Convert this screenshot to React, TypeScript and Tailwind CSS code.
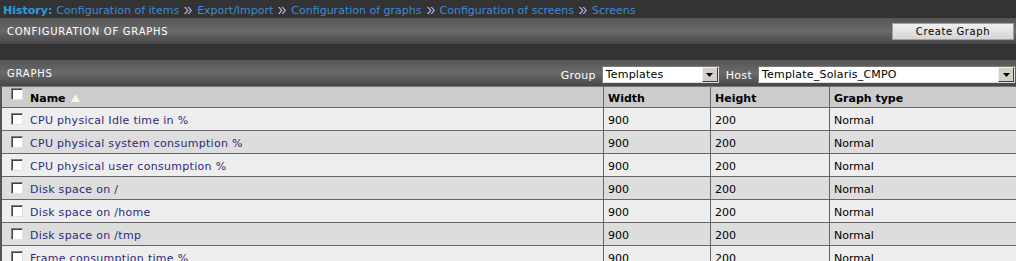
import React from "react";

const font = { fontFamily: '"DejaVu Sans", Verdana, sans-serif' };

const rows = [
  "CPU physical Idle time in %",
  "CPU physical system consumption %",
  "CPU physical user consumption %",
  "Disk space on /",
  "Disk space on /home",
  "Disk space on /tmp",
  "Frame consumption time %",
];

function Check() {
  return (
    <span className="inline-block w-[12px] h-[12px] bg-white border border-t-[#808080] border-l-[#808080] border-b-[#e0e0e0] border-r-[#e0e0e0] shadow-[inset_1px_1px_0_#404040]" />
  );
}

function Sep() {
  return (
    <svg width="8" height="7" viewBox="0 0 8 7" className="mx-[5px]">
      <path d="M0 0l3 3.5L0 7h1.5l3-3.5-3-3.5zM3.5 0l3 3.5-3 3.5H5l3-3.5L5 0z" fill="#b4b4ec" />
    </svg>
  );
}

function Select({ value, w }: { value: string; w: string }) {
  return (
    <div className={`${w} h-[17px] bg-white border border-t-[#7a7a7a] border-l-[#7a7a7a] border-b-[#dcdcdc] border-r-[#dcdcdc] flex items-center`}>
      <span className="flex-1 pl-[3px] text-[11px] text-black leading-none tracking-[0.2px]">{value}</span>
      <span className="w-[16px] h-[15px] bg-[#d4d0c8] border border-t-[#f4f4f4] border-l-[#f4f4f4] border-b-[#404040] border-r-[#404040] flex items-center justify-center">
        <svg width="7" height="4" viewBox="0 0 7 4"><path d="M0 0h7L3.5 4z" fill="#000" /></svg>
      </span>
    </div>
  );
}

export default function App() {
  return (
    <div style={font} className="w-[1016px] h-[261px] overflow-hidden bg-[#eeeeee]">
      {/* History */}
      <div className="h-[18px] bg-[#333333] flex items-center pl-[3px] pt-[2px] text-[11px] leading-none whitespace-nowrap">
        <span className="text-[#2b9be0] font-bold mr-[4px]">History:</span>
        <span className="text-[#3d8ad8]">Configuration of items</span>
        <Sep />
        <span className="text-[#3d8ad8]">Export/Import</span>
        <Sep />
        <span className="text-[#3d8ad8]">Configuration of graphs</span>
        <Sep />
        <span className="text-[#3d8ad8]">Configuration of screens</span>
        <Sep />
        <span className="text-[#3d8ad8]">Screens</span>
      </div>
      {/* Header 1 */}
      <div className="h-[26px] bg-gradient-to-b from-[#555555] via-[#6a6a6a] to-[#474747] flex items-center justify-between pl-[7px]">
        <span className="text-white text-[10px] tracking-[0.75px]">CONFIGURATION OF GRAPHS</span>
        <div className="w-[122px] h-[17px] mt-[1px] mr-[2px] bg-gradient-to-b from-[#f0f0f0] to-[#d4d4d4] border border-[#a0a0a0] flex items-center justify-center text-[10px] text-black tracking-[0.6px]">
          Create Graph
        </div>
      </div>
      <div className="h-[16px] bg-[#333333]" />
      {/* Header 2 */}
      <div className="h-[26px] bg-gradient-to-b from-[#555555] via-[#6a6a6a] to-[#474747] flex items-center pl-[7px]">
        <span className="text-white text-[10px] tracking-[0.75px] mt-[1px]">GRAPHS</span>
        <div className="ml-auto flex items-center mt-[3px]">
          <span className="text-white text-[11px] mr-[6px] mt-[3px] tracking-[0.3px]">Group</span>
          <Select value="Templates" w="w-[117px]" />
          <span className="text-white text-[11px] ml-[7px] mr-[6px] mt-[3px] tracking-[0.3px]">Host</span>
          <Select value="Template_Solaris_CMPO" w="w-[257px]" />
          <span className="w-[1px]" />
        </div>
      </div>
      {/* Table */}
      <div className="border-l-2 border-[#555555] border-t border-t-[#777777]">
        <div className="h-[21px] bg-[#cccccc] flex text-[11px] font-bold text-black border-b border-[#666666]">
          <div className="w-[601px] flex items-center pl-[9px] pt-[5px] gap-[7px]">
            <span className="-mt-[5px]"><Check /></span>
            <span>Name</span>
            <svg width="9" height="8" viewBox="0 0 9 8" className="-ml-[2px] -mt-[4px]"><path d="M4.5 0L9 8H0z" fill="#f4f4f4" /></svg>
          </div>
          <div className="w-[107px] border-l border-[#666666] flex items-center pl-[4px] pt-[5px]">Width</div>
          <div className="w-[119px] border-l border-[#666666] flex items-center pl-[4px] pt-[5px]">Height</div>
          <div className="flex-1 border-l border-[#666666] flex items-center pl-[4px] pt-[5px]">Graph type</div>
        </div>
        {rows.map((r, i) => (
          <div key={r} className={`h-[23px] flex text-[11px] text-black border-b border-[#666666] ${i % 2 === 0 ? "bg-[#eeeeee]" : "bg-[#dddddd]"}`}>
            <div className="w-[601px] flex items-center pl-[9px] gap-[7px]">
              <Check />
              <span className="text-[#2e2a78] tracking-[0.3px] pt-[5px]">{r}</span>
            </div>
            <div className="w-[107px] border-l border-[#666666] flex items-center pl-[4px] pt-[5px]">900</div>
            <div className="w-[119px] border-l border-[#666666] flex items-center pl-[4px] pt-[5px]">200</div>
            <div className="flex-1 border-l border-[#666666] flex items-center pl-[4px] pt-[5px]">Normal</div>
          </div>
        ))}
      </div>
    </div>
  );
}
